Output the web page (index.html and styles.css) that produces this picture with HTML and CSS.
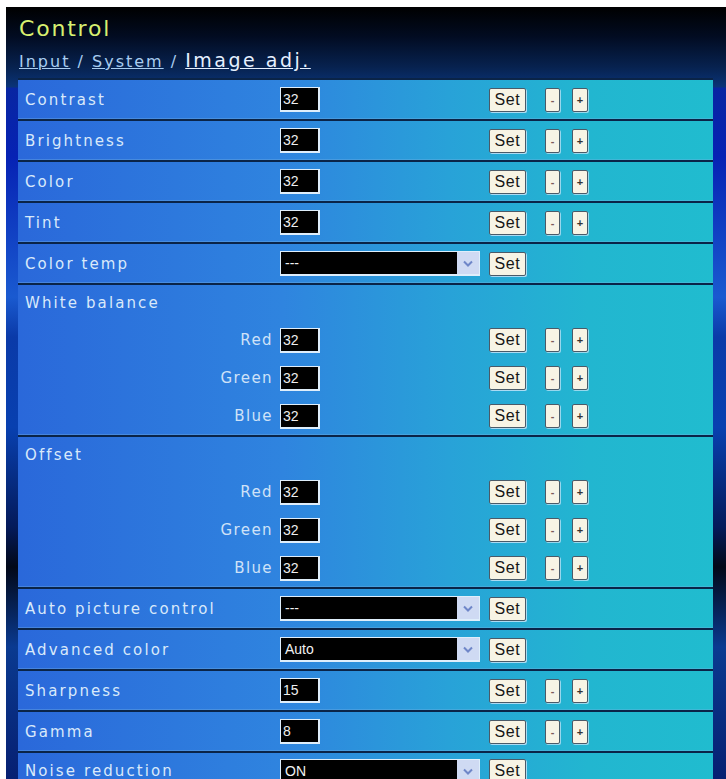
FILE: index.html
```html
<!DOCTYPE html>
<html lang="en">
<head>
<meta charset="utf-8">
<title>Control - Image adj.</title>
<link rel="stylesheet" href="styles.css">
</head>
<body>
<div class="frame">
  <div class="title">Control</div>
  <div class="nav"><a class="link">Input</a> / <a class="link">System</a> / <a class="link cur">Image adj.</a></div>
  <div class="table">
    <div class="row">
      <div class="label">Contrast</div>
      <div class="ctrl"><span class="num">32</span></div>
      <button class="set">Set</button><button class="pm minus">-</button><button class="pm plus">+</button>
    </div>
    <div class="row">
      <div class="label">Brightness</div>
      <div class="ctrl"><span class="num">32</span></div>
      <button class="set">Set</button><button class="pm minus">-</button><button class="pm plus">+</button>
    </div>
    <div class="row">
      <div class="label">Color</div>
      <div class="ctrl"><span class="num">32</span></div>
      <button class="set">Set</button><button class="pm minus">-</button><button class="pm plus">+</button>
    </div>
    <div class="row">
      <div class="label">Tint</div>
      <div class="ctrl"><span class="num">32</span></div>
      <button class="set">Set</button><button class="pm minus">-</button><button class="pm plus">+</button>
    </div>
    <div class="row">
      <div class="label">Color temp</div>
      <div class="ctrl"><div class="select"><span class="val">---</span><span class="arrow"><svg width="10" height="7" viewBox="0 0 10 7"><path d="M1 1.5 L5 5.5 L9 1.5" fill="none" stroke="#6f86c8" stroke-width="2"/></svg></span></div></div>
      <button class="set">Set</button>
    </div>
    <div class="group">
      <div class="ghead">White balance</div>
      <div class="sub">
        <div class="label right">Red</div>
        <div class="ctrl"><span class="num">32</span></div>
        <button class="set">Set</button><button class="pm minus">-</button><button class="pm plus">+</button>
      </div>
      <div class="sub">
        <div class="label right">Green</div>
        <div class="ctrl"><span class="num">32</span></div>
        <button class="set">Set</button><button class="pm minus">-</button><button class="pm plus">+</button>
      </div>
      <div class="sub">
        <div class="label right">Blue</div>
        <div class="ctrl"><span class="num">32</span></div>
        <button class="set">Set</button><button class="pm minus">-</button><button class="pm plus">+</button>
      </div>
    </div>
    <div class="group">
      <div class="ghead">Offset</div>
      <div class="sub">
        <div class="label right">Red</div>
        <div class="ctrl"><span class="num">32</span></div>
        <button class="set">Set</button><button class="pm minus">-</button><button class="pm plus">+</button>
      </div>
      <div class="sub">
        <div class="label right">Green</div>
        <div class="ctrl"><span class="num">32</span></div>
        <button class="set">Set</button><button class="pm minus">-</button><button class="pm plus">+</button>
      </div>
      <div class="sub">
        <div class="label right">Blue</div>
        <div class="ctrl"><span class="num">32</span></div>
        <button class="set">Set</button><button class="pm minus">-</button><button class="pm plus">+</button>
      </div>
    </div>
    <div class="row">
      <div class="label">Auto picture control</div>
      <div class="ctrl"><div class="select"><span class="val">---</span><span class="arrow"><svg width="10" height="7" viewBox="0 0 10 7"><path d="M1 1.5 L5 5.5 L9 1.5" fill="none" stroke="#6f86c8" stroke-width="2"/></svg></span></div></div>
      <button class="set">Set</button>
    </div>
    <div class="row">
      <div class="label">Advanced color</div>
      <div class="ctrl"><div class="select"><span class="val">Auto</span><span class="arrow"><svg width="10" height="7" viewBox="0 0 10 7"><path d="M1 1.5 L5 5.5 L9 1.5" fill="none" stroke="#6f86c8" stroke-width="2"/></svg></span></div></div>
      <button class="set">Set</button>
    </div>
    <div class="row">
      <div class="label">Sharpness</div>
      <div class="ctrl"><span class="num">15</span></div>
      <button class="set">Set</button><button class="pm minus">-</button><button class="pm plus">+</button>
    </div>
    <div class="row">
      <div class="label">Gamma</div>
      <div class="ctrl"><span class="num">8</span></div>
      <button class="set">Set</button><button class="pm minus">-</button><button class="pm plus">+</button>
    </div>
    <div class="row last">
      <div class="label">Noise reduction</div>
      <div class="ctrl"><div class="select"><span class="val">ON</span><span class="arrow"><svg width="10" height="7" viewBox="0 0 10 7"><path d="M1 1.5 L5 5.5 L9 1.5" fill="none" stroke="#6f86c8" stroke-width="2"/></svg></span></div></div>
      <button class="set">Set</button>
    </div>
  </div>
</div>
</body>
</html>
```
FILE: styles.css
```css
html, body {
  margin: 0;
  padding: 0;
  background: #ffffff;
  overflow: hidden;
}
body {
  font-family: "DejaVu Sans", "Liberation Sans", sans-serif;
}
.frame {
  margin: 7px 0 0 6px;
  width: 720px;
  height: 800px;
  box-sizing: border-box;
  padding: 10px 13px 0 12px;
  background:
    linear-gradient(to bottom, #000000 0px, #020c22 30px, #07224f 60px, #0a3478 80px, rgba(10, 52, 120, 0) 81px),
    linear-gradient(to bottom, #0a2a8c 0px, #0622b4 150px, #1a5ad0 290px, #0a3aa8 330px, #0840b0 420px, #041a5a 520px, #020818 560px, #0a3a90 640px, #061e70 779px);
}
.title {
  height: 24px;
  line-height: 24px;
  font-size: 22px;
  letter-spacing: 1.8px;
  color: #d8f070;
  padding-left: 1px;
}
.nav {
  margin-top: 8px;
  height: 22px;
  line-height: 22px;
  font-size: 16px;
  color: #a9cdf0;
  padding-left: 1px;
  white-space: nowrap;
  letter-spacing: 2px;
}
.link {
  text-decoration: underline;
}
.cur {
  font-size: 19px;
  color: #e6f0ff;
  letter-spacing: 2.5px;
}
.table {
  margin-top: 7px;
  width: 695px;
  border-top: 2px solid #0a2448;
  background: linear-gradient(to right, #2a68da 0%, #2f84df 38%, #28a2d8 62%, #22b6d0 82%, #20bccf 100%);
}
.row, .group {
  border-bottom: 2px solid #0a2448;
  box-shadow: inset 0 -1px 0 rgba(120, 180, 230, 0.35);
}
.row {
  height: 39px;
  display: flex;
  align-items: center;
}
.row.last {
  align-items: flex-start;
  padding-top: 6px;
  box-sizing: border-box;
}
.ghead {
  height: 36px;
  display: flex;
  align-items: center;
}
.sub {
  height: 38px;
  display: flex;
  align-items: center;
}
.label, .ghead {
  box-sizing: border-box;
  padding-left: 7px;
  font-size: 15px;
  letter-spacing: 2.1px;
  color: #d9e9fa;
  white-space: nowrap;
}
.label {
  width: 262px;
  flex: none;
}
.row.last .label {
  line-height: 19px;
  padding-top: 3px;
}
.label.right {
  text-align: right;
  padding-right: 7px;
  letter-spacing: 1.4px;
  color: #cfe2f8;
}
.ctrl {
  width: 209px;
  flex: none;
  display: flex;
  align-items: center;
}
.num {
  box-sizing: border-box;
  width: 40px;
  height: 25px;
  background: #000000;
  border: 1px solid #dfeefb;
  border-right-width: 2px;
  border-bottom-width: 2px;
  color: #eeeeee;
  font-family: "Liberation Sans", sans-serif;
  font-size: 14px;
  line-height: 22px;
  padding-left: 2px;
}
.select {
  box-sizing: border-box;
  width: 200px;
  height: 25px;
  display: flex;
  border: 1px solid #dfeefb;
  border-bottom-width: 2px;
  background: #000000;
}
.val {
  flex: 1;
  color: #f2f2f2;
  font-family: "Liberation Sans", sans-serif;
  font-size: 14px;
  line-height: 22px;
  padding-left: 4px;
}
.arrow {
  width: 22px;
  background: #cfdaf3;
  display: flex;
  align-items: center;
  justify-content: center;
}
button {
  font-family: "Liberation Sans", sans-serif;
  margin: 0;
  padding: 0;
  cursor: pointer;
}
.set {
  width: 37px;
  height: 24px;
  background: #f7f4e5;
  border: 1px solid #4a5a68;
  border-radius: 2px;
  box-shadow: 1px 1px 0 rgba(230, 240, 255, 0.7);
  color: #161616;
  font-size: 16px;
  line-height: 20px;
  letter-spacing: 0.6px;
}
.pm {
  width: 15px;
  height: 24px;
  background: #f7f4e5;
  border: 1px solid #4a5a68;
  border-radius: 2px;
  box-shadow: 1px 1px 0 rgba(230, 240, 255, 0.6);
  color: #333333;
  font-size: 11px;
  font-weight: bold;
  line-height: 20px;
}
.minus {
  margin-left: 19px;
  color: #7a5a5a;
}
.plus {
  margin-left: 12px;
  width: 16px;
}
```
